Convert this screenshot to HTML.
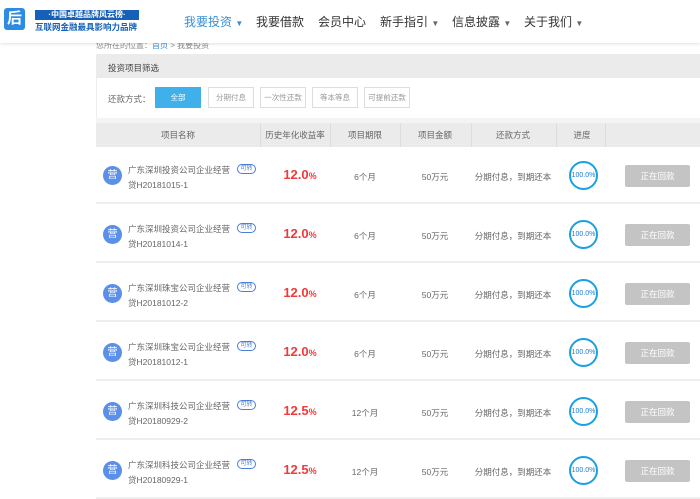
<!DOCTYPE html><html><head><meta charset="utf-8"><style>
*{margin:0;padding:0;box-sizing:border-box}
body{width:700px;height:486px;overflow:hidden;background:#fff;font-family:"Liberation Sans","Noto Sans CJK SC",sans-serif;position:relative;color:#555}
.hd{position:absolute;left:0;top:0;width:700px;height:43px;background:#fff;box-shadow:0 1px 3px rgba(0,0,0,.12);z-index:2}
.nav{position:absolute;top:13px;font-size:12px;color:#333;white-space:nowrap}
.nav span{font-size:8px;color:#666}
.a{position:absolute;font-size:10px;color:#666;white-space:nowrap}
.abs{position:absolute}
.btn{position:absolute;top:87px;height:21px;width:46px;border:1px solid #ddd;font-size:7.5px;color:#999;text-align:center;line-height:19px;white-space:nowrap}
.row{position:absolute;left:96px;width:604px;height:57px;background:#fff;border-bottom:2px solid #eee}
.c{position:absolute;font-size:8.5px;color:#666;text-align:center;white-space:nowrap}
</style></head><body>
<div class="hd">
<div class="abs" style="left:4px;top:8px;width:21px;height:22px;background:#2c8be3;border-radius:3px;color:#fff;font-size:15px;font-weight:bold;text-align:center;line-height:22px">后</div>
<div class="abs" style="left:35px;top:10px;width:104px;height:10px;background:#1560b8;color:#fff;font-size:8px;font-weight:bold;line-height:10px;text-align:center;white-space:nowrap">·中国卓越品牌风云榜·</div>
<div class="abs" style="left:35px;top:21px;font-size:8.5px;font-weight:bold;color:#1560b8;white-space:nowrap">互联网金融最具影响力品牌</div>
<div class="nav" style="left:184px;color:#3a8fd6">我要投资 <span style="color:#3a8fd6">▼</span></div>
<div class="nav" style="left:256px">我要借款</div>
<div class="nav" style="left:318px">会员中心</div>
<div class="nav" style="left:380px">新手指引 <span>▼</span></div>
<div class="nav" style="left:452px">信息披露 <span>▼</span></div>
<div class="nav" style="left:524px">关于我们 <span>▼</span></div>
</div>
<div class="a" style="left:96px;top:40px;font-size:8px;color:#888">您所在的位置：<span style="color:#3a8fd6">首页</span> > 我要投资</div>
<div class="abs" style="left:96px;top:54px;width:604px;height:24px;background:#ebebeb;font-size:8.5px;color:#444;padding:8px 0 0 12px">投资项目筛选</div>
<div class="abs" style="left:96px;top:78px;width:604px;height:40px;background:#fff;border-left:1px solid #eee"></div>
<div class="a" style="left:108px;top:93px;font-size:8.5px">还款方式：</div>
<div class="btn" style="left:155px;background:#40b0ea;border-color:#40b0ea;color:#fff">全部</div>
<div class="btn" style="left:208px">分期付息</div>
<div class="btn" style="left:260px">一次性还款</div>
<div class="btn" style="left:312px">等本等息</div>
<div class="btn" style="left:364px">可提前还款</div>
<div class="abs" style="left:96px;top:118px;width:604px;height:5px;background:#f4f4f4"></div>
<div class="abs" style="left:96px;top:123px;width:604px;height:24px;background:#ebebeb"></div>
<div class="abs" style="left:260px;top:123px;width:1px;height:24px;background:#ddd"></div>
<div class="abs" style="left:330px;top:123px;width:1px;height:24px;background:#ddd"></div>
<div class="abs" style="left:400px;top:123px;width:1px;height:24px;background:#ddd"></div>
<div class="abs" style="left:471px;top:123px;width:1px;height:24px;background:#ddd"></div>
<div class="abs" style="left:556px;top:123px;width:1px;height:24px;background:#ddd"></div>
<div class="abs" style="left:605px;top:123px;width:1px;height:24px;background:#ddd"></div>
<div class="c" style="left:138px;top:129px;width:80px">项目名称</div>
<div class="c" style="left:255px;top:129px;width:80px">历史年化收益率</div>
<div class="c" style="left:325px;top:129px;width:80px">项目期限</div>
<div class="c" style="left:395px;top:129px;width:80px">项目金额</div>
<div class="c" style="left:473px;top:129px;width:80px">还款方式</div>
<div class="c" style="left:542px;top:129px;width:80px">进度</div>
<div class="row" style="top:147px"><div class="abs" style="left:7px;top:19px;width:19px;height:19px;border-radius:50%;background:#5b8fe8;color:#fff;font-size:10px;text-align:center;line-height:19px">营</div><div class="a" style="left:32px;top:16px;line-height:15px;font-size:8.5px">广东深圳投资公司企业经营<br>贷H20181015-1</div><div class="abs" style="left:141px;top:17px;width:19px;height:10px;border:1px solid #4a7fd8;border-radius:5px;font-size:6px;color:#4a7fd8;text-align:center;line-height:8px">可转</div><div class="c" style="left:159px;top:20px;width:90px;font-size:13px;font-weight:bold;color:#f03a3a">12.0<span style="font-size:9px">%</span></div><div class="c" style="left:229px;top:24px;width:80px">6个月</div><div class="c" style="left:299px;top:24px;width:80px">50万元</div><div class="c" style="left:367px;top:24px;width:100px">分期付息，到期还本</div><div class="abs" style="left:473px;top:14px;width:29px;height:29px;border:2px solid #1ba0e2;border-radius:50%;font-size:7px;color:#1b7ad8;text-align:center;line-height:25px">100.0%</div><div class="abs" style="left:529px;top:18px;width:65px;height:22px;background:#c4c4c4;border-radius:2px;color:#fff;font-size:8.5px;text-align:center;line-height:22px">正在回款</div></div>
<div class="row" style="top:206px"><div class="abs" style="left:7px;top:19px;width:19px;height:19px;border-radius:50%;background:#5b8fe8;color:#fff;font-size:10px;text-align:center;line-height:19px">营</div><div class="a" style="left:32px;top:16px;line-height:15px;font-size:8.5px">广东深圳投资公司企业经营<br>贷H20181014-1</div><div class="abs" style="left:141px;top:17px;width:19px;height:10px;border:1px solid #4a7fd8;border-radius:5px;font-size:6px;color:#4a7fd8;text-align:center;line-height:8px">可转</div><div class="c" style="left:159px;top:20px;width:90px;font-size:13px;font-weight:bold;color:#f03a3a">12.0<span style="font-size:9px">%</span></div><div class="c" style="left:229px;top:24px;width:80px">6个月</div><div class="c" style="left:299px;top:24px;width:80px">50万元</div><div class="c" style="left:367px;top:24px;width:100px">分期付息，到期还本</div><div class="abs" style="left:473px;top:14px;width:29px;height:29px;border:2px solid #1ba0e2;border-radius:50%;font-size:7px;color:#1b7ad8;text-align:center;line-height:25px">100.0%</div><div class="abs" style="left:529px;top:18px;width:65px;height:22px;background:#c4c4c4;border-radius:2px;color:#fff;font-size:8.5px;text-align:center;line-height:22px">正在回款</div></div>
<div class="row" style="top:265px"><div class="abs" style="left:7px;top:19px;width:19px;height:19px;border-radius:50%;background:#5b8fe8;color:#fff;font-size:10px;text-align:center;line-height:19px">营</div><div class="a" style="left:32px;top:16px;line-height:15px;font-size:8.5px">广东深圳珠宝公司企业经营<br>贷H20181012-2</div><div class="abs" style="left:141px;top:17px;width:19px;height:10px;border:1px solid #4a7fd8;border-radius:5px;font-size:6px;color:#4a7fd8;text-align:center;line-height:8px">可转</div><div class="c" style="left:159px;top:20px;width:90px;font-size:13px;font-weight:bold;color:#f03a3a">12.0<span style="font-size:9px">%</span></div><div class="c" style="left:229px;top:24px;width:80px">6个月</div><div class="c" style="left:299px;top:24px;width:80px">50万元</div><div class="c" style="left:367px;top:24px;width:100px">分期付息，到期还本</div><div class="abs" style="left:473px;top:14px;width:29px;height:29px;border:2px solid #1ba0e2;border-radius:50%;font-size:7px;color:#1b7ad8;text-align:center;line-height:25px">100.0%</div><div class="abs" style="left:529px;top:18px;width:65px;height:22px;background:#c4c4c4;border-radius:2px;color:#fff;font-size:8.5px;text-align:center;line-height:22px">正在回款</div></div>
<div class="row" style="top:324px"><div class="abs" style="left:7px;top:19px;width:19px;height:19px;border-radius:50%;background:#5b8fe8;color:#fff;font-size:10px;text-align:center;line-height:19px">营</div><div class="a" style="left:32px;top:16px;line-height:15px;font-size:8.5px">广东深圳珠宝公司企业经营<br>贷H20181012-1</div><div class="abs" style="left:141px;top:17px;width:19px;height:10px;border:1px solid #4a7fd8;border-radius:5px;font-size:6px;color:#4a7fd8;text-align:center;line-height:8px">可转</div><div class="c" style="left:159px;top:20px;width:90px;font-size:13px;font-weight:bold;color:#f03a3a">12.0<span style="font-size:9px">%</span></div><div class="c" style="left:229px;top:24px;width:80px">6个月</div><div class="c" style="left:299px;top:24px;width:80px">50万元</div><div class="c" style="left:367px;top:24px;width:100px">分期付息，到期还本</div><div class="abs" style="left:473px;top:14px;width:29px;height:29px;border:2px solid #1ba0e2;border-radius:50%;font-size:7px;color:#1b7ad8;text-align:center;line-height:25px">100.0%</div><div class="abs" style="left:529px;top:18px;width:65px;height:22px;background:#c4c4c4;border-radius:2px;color:#fff;font-size:8.5px;text-align:center;line-height:22px">正在回款</div></div>
<div class="row" style="top:383px"><div class="abs" style="left:7px;top:19px;width:19px;height:19px;border-radius:50%;background:#5b8fe8;color:#fff;font-size:10px;text-align:center;line-height:19px">营</div><div class="a" style="left:32px;top:16px;line-height:15px;font-size:8.5px">广东深圳科技公司企业经营<br>贷H20180929-2</div><div class="abs" style="left:141px;top:17px;width:19px;height:10px;border:1px solid #4a7fd8;border-radius:5px;font-size:6px;color:#4a7fd8;text-align:center;line-height:8px">可转</div><div class="c" style="left:159px;top:20px;width:90px;font-size:13px;font-weight:bold;color:#f03a3a">12.5<span style="font-size:9px">%</span></div><div class="c" style="left:229px;top:24px;width:80px">12个月</div><div class="c" style="left:299px;top:24px;width:80px">50万元</div><div class="c" style="left:367px;top:24px;width:100px">分期付息，到期还本</div><div class="abs" style="left:473px;top:14px;width:29px;height:29px;border:2px solid #1ba0e2;border-radius:50%;font-size:7px;color:#1b7ad8;text-align:center;line-height:25px">100.0%</div><div class="abs" style="left:529px;top:18px;width:65px;height:22px;background:#c4c4c4;border-radius:2px;color:#fff;font-size:8.5px;text-align:center;line-height:22px">正在回款</div></div>
<div class="row" style="top:442px"><div class="abs" style="left:7px;top:19px;width:19px;height:19px;border-radius:50%;background:#5b8fe8;color:#fff;font-size:10px;text-align:center;line-height:19px">营</div><div class="a" style="left:32px;top:16px;line-height:15px;font-size:8.5px">广东深圳科技公司企业经营<br>贷H20180929-1</div><div class="abs" style="left:141px;top:17px;width:19px;height:10px;border:1px solid #4a7fd8;border-radius:5px;font-size:6px;color:#4a7fd8;text-align:center;line-height:8px">可转</div><div class="c" style="left:159px;top:20px;width:90px;font-size:13px;font-weight:bold;color:#f03a3a">12.5<span style="font-size:9px">%</span></div><div class="c" style="left:229px;top:24px;width:80px">12个月</div><div class="c" style="left:299px;top:24px;width:80px">50万元</div><div class="c" style="left:367px;top:24px;width:100px">分期付息，到期还本</div><div class="abs" style="left:473px;top:14px;width:29px;height:29px;border:2px solid #1ba0e2;border-radius:50%;font-size:7px;color:#1b7ad8;text-align:center;line-height:25px">100.0%</div><div class="abs" style="left:529px;top:18px;width:65px;height:22px;background:#c4c4c4;border-radius:2px;color:#fff;font-size:8.5px;text-align:center;line-height:22px">正在回款</div></div>
</body></html>
